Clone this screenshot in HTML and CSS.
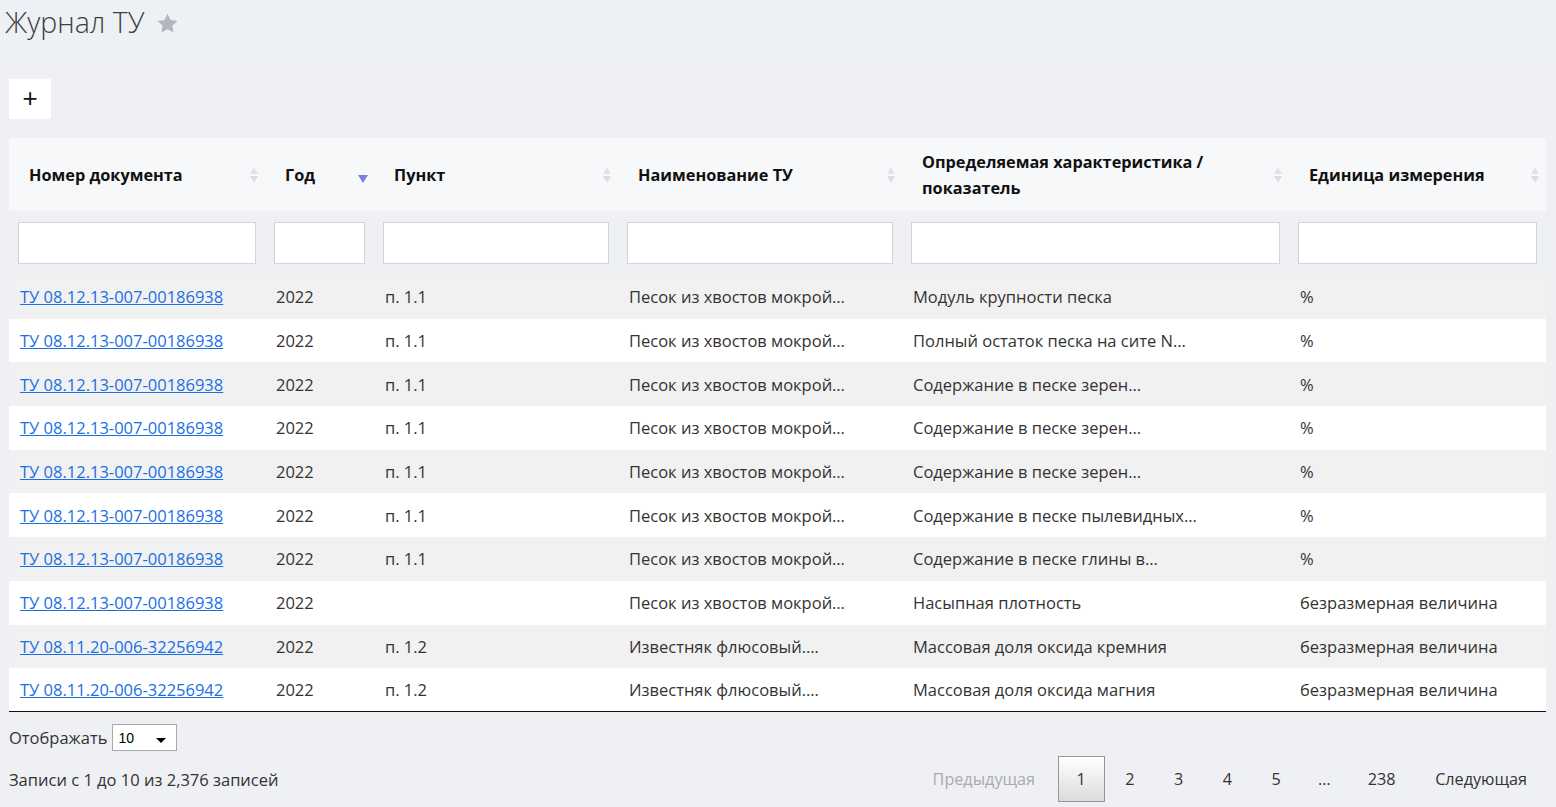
FILE: index.html
```html
<!DOCTYPE html>
<html lang="ru">
<head>
<meta charset="utf-8">
<title>Журнал ТУ</title>
<link rel="stylesheet" href="styles.css">
</head>
<body>
<div class="page-head">
  <h1 class="page-title">Журнал ТУ</h1>
  <svg class="star" viewBox="0 0 24 24" width="23" height="23"><path d="M12 1.8l3.1 6.6 7.2.9-5.3 5 1.4 7.1L12 17.9l-6.4 3.5 1.4-7.1-5.3-5 7.2-.9z" fill="#b3b7bd"/></svg>
</div>
<div class="content">
  <button class="add-btn" type="button">+</button>
  <table class="grid">
    <colgroup>
      <col class="c1"><col class="c2"><col class="c3"><col class="c4"><col class="c5"><col class="c6">
    </colgroup>
    <thead>
      <tr class="head-row">
        <th><span class="th-text">Номер документа</span><span class="sort"></span></th>
        <th><span class="th-text">Год</span><span class="sort-desc"></span></th>
        <th><span class="th-text">Пункт</span><span class="sort"></span></th>
        <th><span class="th-text">Наименование ТУ</span><span class="sort"></span></th>
        <th><span class="th-text">Определяемая характеристика / показатель</span><span class="sort"></span></th>
        <th><span class="th-text">Единица измерения</span><span class="sort"></span></th>
      </tr>
      <tr class="filter-row">
        <th><input class="filter" type="text"></th>
        <th><input class="filter" type="text"></th>
        <th><input class="filter" type="text"></th>
        <th><input class="filter" type="text"></th>
        <th><input class="filter" type="text"></th>
        <th><input class="filter" type="text"></th>
      </tr>
    </thead>
    <tbody>
      <tr><td><a href="#">ТУ 08.12.13-007-00186938</a></td><td>2022</td><td>п. 1.1</td><td>Песок из хвостов мокрой…</td><td>Модуль крупности песка</td><td>%</td></tr>
      <tr><td><a href="#">ТУ 08.12.13-007-00186938</a></td><td>2022</td><td>п. 1.1</td><td>Песок из хвостов мокрой…</td><td>Полный остаток песка на сите N…</td><td>%</td></tr>
      <tr><td><a href="#">ТУ 08.12.13-007-00186938</a></td><td>2022</td><td>п. 1.1</td><td>Песок из хвостов мокрой…</td><td>Содержание в песке зерен…</td><td>%</td></tr>
      <tr><td><a href="#">ТУ 08.12.13-007-00186938</a></td><td>2022</td><td>п. 1.1</td><td>Песок из хвостов мокрой…</td><td>Содержание в песке зерен…</td><td>%</td></tr>
      <tr><td><a href="#">ТУ 08.12.13-007-00186938</a></td><td>2022</td><td>п. 1.1</td><td>Песок из хвостов мокрой…</td><td>Содержание в песке зерен…</td><td>%</td></tr>
      <tr><td><a href="#">ТУ 08.12.13-007-00186938</a></td><td>2022</td><td>п. 1.1</td><td>Песок из хвостов мокрой…</td><td>Содержание в песке пылевидных…</td><td>%</td></tr>
      <tr><td><a href="#">ТУ 08.12.13-007-00186938</a></td><td>2022</td><td>п. 1.1</td><td>Песок из хвостов мокрой…</td><td>Содержание в песке глины в…</td><td>%</td></tr>
      <tr><td><a href="#">ТУ 08.12.13-007-00186938</a></td><td>2022</td><td></td><td>Песок из хвостов мокрой…</td><td>Насыпная плотность</td><td>безразмерная величина</td></tr>
      <tr><td><a href="#">ТУ 08.11.20-006-32256942</a></td><td>2022</td><td>п. 1.2</td><td>Известняк флюсовый.…</td><td>Массовая доля оксида кремния</td><td>безразмерная величина</td></tr>
      <tr><td><a href="#">ТУ 08.11.20-006-32256942</a></td><td>2022</td><td>п. 1.2</td><td>Известняк флюсовый.…</td><td>Массовая доля оксида магния</td><td>безразмерная величина</td></tr>
    </tbody>
  </table>
  <div class="footer">
    <div class="length">
      <span>Отображать</span>
      <div class="select"><span>10</span><span class="caret"></span></div>
    </div>
    <div class="footer-row">
      <div class="info">Записи с 1 до 10 из 2,376 записей</div>
      <div class="paging">
        <span class="pg disabled">Предыдущая</span>
        <span class="pg current">1</span>
        <span class="pg">2</span>
        <span class="pg">3</span>
        <span class="pg">4</span>
        <span class="pg">5</span>
        <span class="pg ellipsis">…</span>
        <span class="pg">238</span>
        <span class="pg">Следующая</span>
      </div>
    </div>
  </div>
</div>
</body>
</html>
```

FILE: styles.css
```css
* { box-sizing: border-box; }
html, body { margin: 0; padding: 0; }
body {
  background: #eef0f3;
  font-family: "Open Sans", "Liberation Sans", sans-serif;
  font-size: 16.5px;
  color: #333;
  width: 1556px;
  height: 807px;
  overflow: hidden;
}
.page-head {
  height: 62px;
  background: #edf0f4;
  display: flex;
  align-items: flex-start;
  padding: 2px 0 0 5px;
}
.page-title {
  margin: 0;
  font-size: 28.5px;
  font-weight: 300;
  color: #3f3f3f;
  line-height: 40px;
}
.star { margin: 10px 0 0 12px; }
.content { padding: 17px 10px 0 9px; }
.add-btn {
  display: flex;
  align-items: center;
  justify-content: center;
  width: 42px;
  height: 40px;
  border: none;
  background: #fff;
  font-family: "Liberation Sans", sans-serif;
  font-size: 26px;
  font-weight: 400;
  color: #111;
  padding: 0 0 2px 0;
  margin: 0 0 19px 0;
}
.grid {
  width: 1537px;
  border-collapse: collapse;
  table-layout: fixed;
}
.c1 { width: 256px; }
.c2 { width: 109px; }
.c3 { width: 244px; }
.c4 { width: 284px; }
.c5 { width: 387px; }
.c6 { width: 257px; }
.head-row th {
  background: #f7f8fa;
  height: 73px;
  padding: 1px 30px 0 20px;
  text-align: left;
  font-weight: 700;
  font-size: 16.3px;
  line-height: 26px;
  color: #111;
  position: relative;
  vertical-align: middle;
}
.sort {
  position: absolute;
  right: 6px;
  top: 29px;
  width: 10px;
  height: 16px;
}
.sort::before, .sort::after {
  content: "";
  position: absolute;
  left: 1px;
  border-left: 4px solid transparent;
  border-right: 4px solid transparent;
}
.sort::before { top: 0; border-bottom: 7px solid #e2e3e6; }
.sort::after { top: 9px; border-top: 7px solid #dcdde0; }
.sort-desc {
  position: absolute;
  right: 6px;
  top: 37px;
  border-left: 5px solid transparent;
  border-right: 5px solid transparent;
  border-top: 8px solid #7c80d6;
}
.filter-row th {
  padding: 11px 9px;
  height: 64px;
  background: #eef0f3;
}
.filter {
  display: block;
  width: 100%;
  height: 42px;
  border: 1px solid #d2d5db;
  background: #fff;
  margin: 0;
}
.grid tbody td {
  height: 43.7px;
  padding: 0 11px;
  white-space: nowrap;
  overflow: hidden;
  font-size: 16.5px;
  color: #333;
  vertical-align: middle;
}
.grid tbody tr:nth-child(odd) td { background: #f1f1f1; }
.grid tbody tr:nth-child(even) td { background: #fff; }
.grid tbody tr:last-child td { border-bottom: 1px solid #111; }
.grid a { color: #1a6fe3; text-decoration: underline; }
.footer { padding-top: 12px; }
.length {
  display: flex;
  align-items: center;
  gap: 5px;
  color: #333;
}
.select {
  width: 65px;
  height: 27px;
  border: 1px solid #a9a9a9;
  background: #fff;
  display: flex;
  align-items: center;
  justify-content: space-between;
  padding: 0 10px 0 5px;
  font-family: "Liberation Sans", sans-serif;
  font-size: 14px;
  color: #000;
}
.caret {
  margin-top: 6px;
  border-left: 5px solid transparent;
  border-right: 5px solid transparent;
  border-top: 5px solid #000;
}
.footer-row {
  display: flex;
  justify-content: space-between;
  align-items: center;
  margin-top: 5px;
}
.info { color: #333; }
.paging { display: flex; align-items: center; font-size: 16.2px; }
.pg {
  min-width: 46px;
  height: 46px;
  padding: 0 18px;
  margin-left: 1.5px;
  display: flex;
  align-items: center;
  justify-content: center;
  color: #333;
  border: 1px solid transparent;
}
.pg.disabled { color: #aaa; padding-right: 20px; }
.pg.current {
  border: 1px solid #979797;
  background: linear-gradient(to bottom, #ffffff 0%, #dcdcdc 100%);
  color: #333;
}
.pg.ellipsis { padding: 0; }
```
